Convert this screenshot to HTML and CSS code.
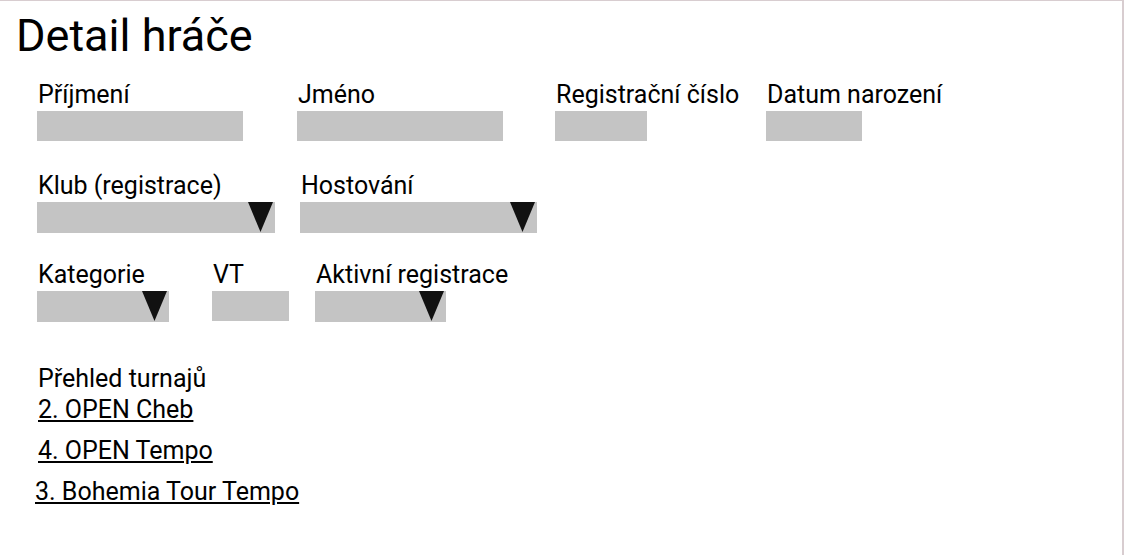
FILE: index.html
```html
<!DOCTYPE html>
<html lang="cs">
<head>
    <meta charset="UTF-8">
    <meta name="viewport" content="width=device-width, initial-scale=1.0">
    <title>Detail hráče</title>
    <link rel="stylesheet" href="styles.css">
</head>
<body>
    <div class="page">
        <h1>Detail hráče</h1>

        <div class="form-row first">
            <div class="field f-surname">
                <label>Příjmení</label>
                <div class="input w-206"></div>
            </div>
            <div class="field f-name">
                <label>Jméno</label>
                <div class="input w-206"></div>
            </div>
            <div class="field f-reg">
                <label>Registrační číslo</label>
                <div class="input w-92"></div>
            </div>
            <div class="field">
                <label>Datum narození</label>
                <div class="input w-96"></div>
            </div>
        </div>

        <div class="form-row second">
            <div class="field f-club">
                <label>Klub (registrace)</label>
                <div class="select w-238"></div>
            </div>
            <div class="field">
                <label>Hostování</label>
                <div class="select w-237"></div>
            </div>
        </div>

        <div class="form-row third">
            <div class="field f-cat">
                <label>Kategorie</label>
                <div class="select w-132"></div>
            </div>
            <div class="field f-vt">
                <label>VT</label>
                <div class="input w-77"></div>
            </div>
            <div class="field">
                <label>Aktivní registrace</label>
                <div class="select w-131"></div>
            </div>
        </div>

        <div class="tournaments">
            <p>Přehled turnajů</p>
            <a href="#">2. OPEN Cheb</a>
            <a href="#">4. OPEN Tempo</a>
            <a href="#" class="shift">3. Bohemia Tour Tempo</a>
        </div>
    </div>
</body>
</html>
```

FILE: styles.css
```css
body {
    margin: 0;
    font-family: Roboto, 'Liberation Sans', sans-serif;
    color: #000;
    background: #fff;
}

.page {
    box-sizing: border-box;
    width: 1124px;
    height: 555px;
    border-top: 1px solid #d8cdd0;
    border-right: 2px solid #d8cdd0;
    padding: 0 0 0 37px;
}

h1 {
    font-size: 45px;
    font-weight: 400;
    line-height: 53px;
    margin: 8px 0 0 -21px;
}

.form-row {
    display: flex;
}

.form-row.first {
    margin-top: 18px;
}

.form-row.second {
    margin-top: 30px;
}

.form-row.third {
    margin-top: 27px;
}

.field {
    display: flex;
    flex-direction: column;
    align-items: flex-start;
}

label {
    font-size: 25px;
    line-height: 29px;
    margin: 0 0 2px 1px;
}

.input,
.select {
    background: #c4c4c4;
    height: 30px;
}

.select {
    height: 31px;
    display: flex;
    justify-content: flex-end;
    box-sizing: border-box;
    padding-right: 2px;
}

.select::after {
    content: "";
    width: 25px;
    height: 30px;
    background: #111;
    clip-path: polygon(0 0, 100% 0, 50% 100%);
}

.f-surname { width: 260px; }
.f-name { width: 258px; }
.f-reg { width: 211px; }
.f-club { width: 263px; }
.f-cat { width: 175px; }
.f-vt { width: 103px; }

.w-206 { width: 206px; }
.w-92 { width: 92px; }
.w-96 { width: 96px; }
.w-238 { width: 238px; }
.w-237 { width: 237px; }
.w-132 { width: 132px; }
.w-131 { width: 131px; }
.w-77 { width: 77px; }

.tournaments {
    display: flex;
    flex-direction: column;
    align-items: flex-start;
    margin-top: 42px;
    padding-left: 1px;
    font-size: 25px;
}

.tournaments p {
    margin: 0;
    line-height: 29px;
}

.tournaments a {
    color: #000;
    line-height: 29px;
    margin-bottom: 12px;
    text-underline-offset: 2px;
}

.tournaments p + a {
    margin-top: 2px;
}

.tournaments a.shift {
    margin-left: -3px;
}
```
